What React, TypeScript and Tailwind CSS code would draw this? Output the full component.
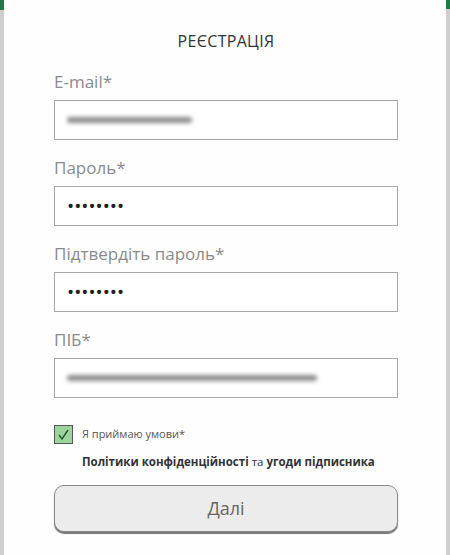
import { useState } from 'react';

const font = { fontFamily: '"Open Sans", "Noto Sans", sans-serif' };

// Поле форми з підписом
const Field = ({ label, children }: { label: string; children: React.ReactNode }) => (
  <div className="mb-[16px]">
    <label className="block text-[17px] leading-[24px] text-[#8b8b8b] mb-[6px]">{label}</label>
    <div className="h-[40px] border border-[#a8a8a8] bg-white flex items-center px-[12px]">
      {children}
    </div>
  </div>
);

const Dots = () => (
  <span className="text-[19px] text-[#222] leading-none">••••••••</span>
);

const Blur = ({ w }: { w: number }) => (
  <div className="h-[6px] bg-[#8a8a8a] rounded-full blur-[2px]" style={{ width: w }} />
);

export default function App() {
  const [agreed, setAgreed] = useState(true);

  return (
    <div className="w-[450px] h-[555px] bg-[#d0d0d0] flex" style={font}>
      {/* бокові смуги */}
      <div className="w-[4px] flex flex-col">
        <div className="h-[10px] bg-[#1f7a45]" />
        <div className="flex-1 bg-[#cfcfcf]" />
      </div>
      <div className="flex-1 bg-[#fefefe] pl-[50px] pr-[48px]">
        <h1 className="mt-[29px] text-center text-[16px] leading-[24px] text-[#333] tracking-[0.3px] mb-[17px]">
          РЕЄСТРАЦІЯ
        </h1>

        <Field label="E-mail*">
          <Blur w={125} />
        </Field>
        <Field label="Пароль*">
          <Dots />
        </Field>
        <Field label="Підтвердіть пароль*">
          <Dots />
        </Field>
        <Field label="ПІБ*">
          <Blur w={250} />
        </Field>

        <div className="mt-[27px] flex items-start">
          <button
            onClick={() => setAgreed(!agreed)}
            className="w-[19px] h-[19px] border border-[#555] bg-[#9bd49d] flex items-center justify-center shrink-0"
          >
            {agreed && (
              <svg width="13" height="13" viewBox="0 0 13 13">
                <path d="M2 7 L5 11 L11 2" fill="none" stroke="#1d5a2a" strokeWidth="1.4" />
              </svg>
            )}
          </button>
          <div className="ml-[9px]">
            <div className="text-[11px] leading-[16px] text-[#555] mt-[1px]">Я приймаю умови*</div>
            <div className="text-[11.5px] leading-[16px] text-[#333] mt-[12px]">
              <b className="font-bold">Політики конфіденційності</b> та <b className="font-bold">угоди підписника</b>
            </div>
          </div>
        </div>

        <button className="mt-[15px] w-full h-[47px] rounded-[10px] bg-[#ececec] border-[1.5px] border-[#8a8a8a] shadow-[0_2px_1px_#777] text-[18px] text-[#666]">
          Далі
        </button>
      </div>
      <div className="w-[4px] flex flex-col">
        <div className="h-[9px] bg-[#1f7a45]" />
        <div className="flex-1 bg-[#cfcfcf]" />
      </div>
    </div>
  );
}
